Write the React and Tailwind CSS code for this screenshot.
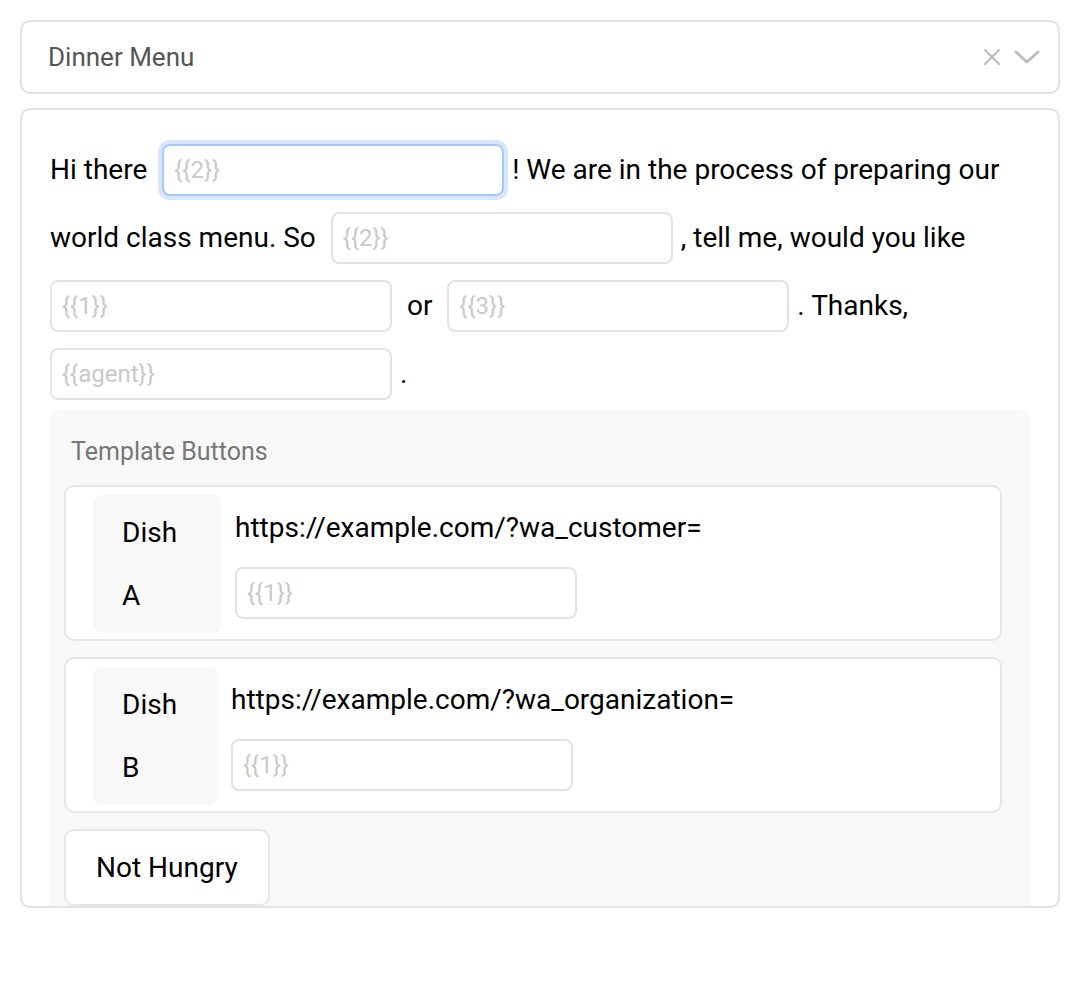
import React from "react";

const inputBase =
  "relative -top-[2px] inline-block align-middle w-[342px] h-[52px] rounded-[8px] border-2 border-[#e3e3e3] bg-white px-[10px] text-[24px] text-[#222] placeholder:text-[#c9c9c9] outline-none";

function Field({ ph, className = "", focused = false }) {
  return (
    <input
      readOnly
      placeholder={ph}
      className={
        inputBase +
        " " +
        className +
        (focused ? " !border-[#a6c8fa] shadow-[0_0_0_4px_#d7e6fc]" : "")
      }
    />
  );
}

function DishCard({ label, url, boxW }) {
  return (
    <div className="flex rounded-[10px] border-2 border-[#e6e6e6] bg-white pl-[27px] pt-[8px] pb-[6px] pr-4">
      <div
        className={`${boxW} shrink-0 rounded-[8px] bg-[#f8f8f8] px-[29px] py-[6px] text-[28px] leading-[63px] text-black`}
      >
        {label}
      </div>
      <div className="ml-[14px] flex flex-col pt-[1px]">
        <div className="text-[28px] leading-[63px] text-black">{url}</div>
        <div className="mt-[8px]">
          <Field ph="{{1}}" className="!top-0" />
        </div>
      </div>
    </div>
  );
}

export default function App() {
  return (
    <div className="bg-white px-[20px] pt-[20px] pb-10 font-['Roboto',sans-serif]" style={{ minHeight: 1000 }}>
      <div className="flex h-[74px] w-[1040px] items-center rounded-[10px] border-2 border-[#e2e2e2] pl-[26px] pr-[18px]">
        <span className="flex-1 text-[26px] leading-[30px] text-[#555]">Dinner Menu</span>
        <svg width="18" height="18" viewBox="0 0 18 18" className="mr-[13px]">
          <path d="M2 2 L16 16 M16 2 L2 16" stroke="#bdbdbd" strokeWidth="2.2" strokeLinecap="round" />
        </svg>
        <svg width="26" height="16" viewBox="0 0 26 16">
          <path d="M2 3 L13 13 L24 3" stroke="#bdbdbd" strokeWidth="3" fill="none" strokeLinecap="round" strokeLinejoin="round" />
        </svg>
      </div>

      <div className="mt-[14px] h-[800px] w-[1040px] overflow-hidden rounded-[10px] border-2 border-[#e2e2e2] px-[28px] pt-[26px]">
        <div className="text-[28px] leading-[68px] text-black">
          Hi there <Field ph="{{2}}" focused className="ml-[8px] mr-[8px]" />! We are in the process of preparing our world class menu. So{" "}
          <Field ph="{{2}}" className="ml-[8px] mr-[8px]" />, tell me, would you like{" "}
          <Field ph="{{1}}" className="mr-[8px]" /> or{" "}
          <Field ph="{{3}}" className="ml-[8px] mr-[8px]" />. Thanks,{" "}
          <Field ph="{{agent}}" className="mr-[8px]" />.
        </div>

        <div className="mt-[2px] rounded-[10px] bg-[#f8f8f8] pl-[14px] pr-[28px] pb-6">
          <div className="pl-[7px] pt-[24px] pb-[15px] text-[25px] leading-[36px] text-[#777]">Template Buttons</div>
          <div className="flex flex-col gap-[16px]">
            <DishCard label="Dish A" url="https://example.com/?wa_customer=" boxW="w-[128px]" />
            <DishCard label="Dish B" url="https://example.com/?wa_organization=" boxW="w-[124px]" />
            <div>
              <div className="inline-block rounded-[10px] border-2 border-[#e6e6e6] bg-white px-[30px] py-[5px] text-[28px] leading-[63px] text-black">
                Not Hungry
              </div>
            </div>
          </div>
        </div>
      </div>
    </div>
  );
}
